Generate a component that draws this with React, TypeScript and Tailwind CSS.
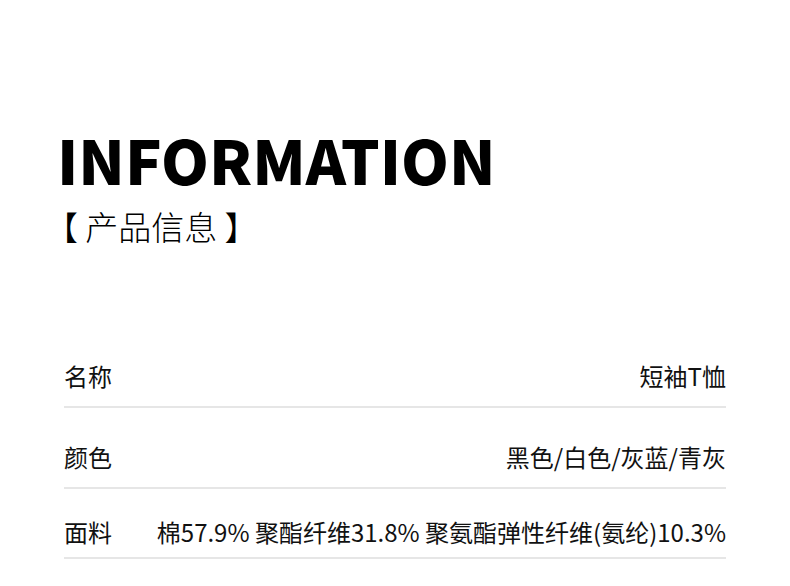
const rows = [
  { label: "名称", value: "短袖T恤", pad: "pt-0 pb-[14px]" },
  { label: "颜色", value: "黑色/白色/灰蓝/青灰", pad: "pt-[33px] pb-[14px]" },
  { label: "面料", value: "棉57.9% 聚酯纤维31.8% 聚氨酯弹性纤维(氨纶)10.3%", pad: "pt-[27px] pb-[9px]" },
];

export default function App() {
  return (
    <div className="w-[790px] h-[586px] bg-white overflow-hidden font-['Noto_Sans_CJK_SC',sans-serif] text-black">
      <div className="pt-[127px] pl-[57px]">
        <h1 className="text-[61px] leading-[64px] font-black">INFORMATION</h1>
        <div className="mt-[17px] -ml-[12px] text-[33px] leading-[36px] font-light whitespace-pre">
          【 产品信息 】
        </div>
      </div>
      <div className="mt-[116px] px-[64px] text-[24px] leading-[32px] text-[#111]">
        {rows.map((r) => (
          <div
            key={r.label}
            className={`flex items-center justify-between border-b-2 border-[#e6e6e6] ${r.pad}`}
          >
            <span>{r.label}</span>
            <span>{r.value}</span>
          </div>
        ))}
      </div>
    </div>
  );
}
